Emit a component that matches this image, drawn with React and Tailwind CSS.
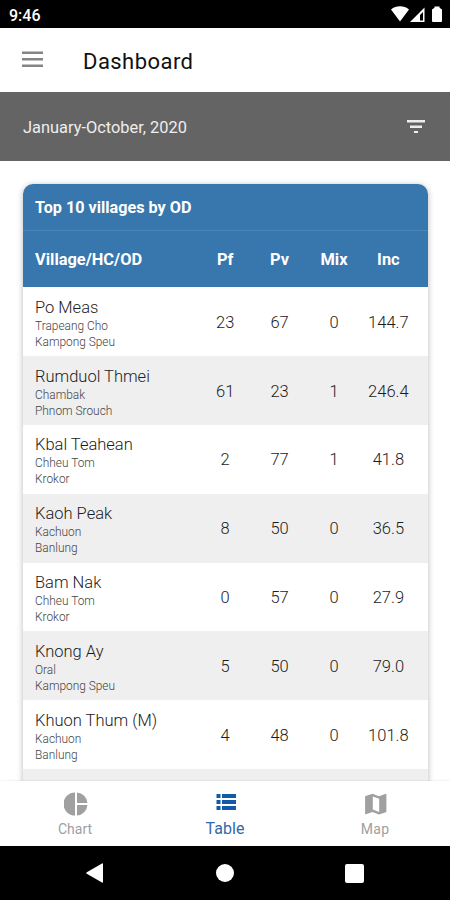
import React from 'react';

const villages = [
  { name: 'Po Meas', hc: 'Trapeang Cho', od: 'Kampong Speu', pf: '23', pv: '67', mix: '0', inc: '144.7' },
  { name: 'Rumduol Thmei', hc: 'Chambak', od: 'Phnom Srouch', pf: '61', pv: '23', mix: '1', inc: '246.4' },
  { name: 'Kbal Teahean', hc: 'Chheu Tom', od: 'Krokor', pf: '2', pv: '77', mix: '1', inc: '41.8' },
  { name: 'Kaoh Peak', hc: 'Kachuon', od: 'Banlung', pf: '8', pv: '50', mix: '0', inc: '36.5' },
  { name: 'Bam Nak', hc: 'Chheu Tom', od: 'Krokor', pf: '0', pv: '57', mix: '0', inc: '27.9' },
  { name: 'Knong Ay', hc: 'Oral', od: 'Kampong Speu', pf: '5', pv: '50', mix: '0', inc: '79.0' },
  { name: 'Khuon Thum (M)', hc: 'Kachuon', od: 'Banlung', pf: '4', pv: '48', mix: '0', inc: '101.8' },
];

function StatusBar() {
  return (
    <div className="flex h-7 shrink-0 items-center justify-between bg-black pl-[9px] pr-2 text-white">
      <span className="pt-[3px] text-[16px] font-medium leading-none">9:46</span>
      <svg className="h-7 w-[52px]" viewBox="0 0 52 28" fill="currentColor">
        <path d="M1 9.500C6 5.300 14 5.300 19 9.500L10 21.500Z" />
        <path d="M34.500 7.500V22H20ZM33 12L30 15V20.500H33Z" fillRule="evenodd" />
        <path d="M44.500 6.500h5v1.200l2.500 1.800V21q0 1-1 1h-8q-1 0-1-1V9.500l2.500-1.800z" />
      </svg>
    </div>
  );
}

function AppBar() {
  return (
    <header className="flex h-16 shrink-0 items-center bg-white pl-[22px]">
      <svg className="mb-0.5 h-4 w-[21px] text-[#858585]" viewBox="0 0 21 16" fill="currentColor">
        <path d="M0 .5h21v2.500H0zM0 7h21v2.500H0zM0 13.500h21V16H0z" />
      </svg>
      <h1 className="ml-10 mt-[3px] text-[22px] font-normal leading-none tracking-[0.45px] text-[#111]">Dashboard</h1>
    </header>
  );
}

function FilterBar() {
  return (
    <div className="flex h-[68.500px] shrink-0 items-center justify-between bg-[#646464] pl-[23px] pr-[25px] text-[#eee]">
      <span className="mt-1 text-[16.400px] leading-none">January-October, 2020</span>
      <svg className="h-[13px] w-[18px]" viewBox="0 0 18 13" fill="currentColor">
        <path d="M0 0h18v2.500H0zM3 5.500h12V8H3zM7 11h4v2H7z" />
      </svg>
    </div>
  );
}

function VillageRow({ village }) {
  return (
    <div className="grid h-[68.850px] grid-cols-[163px_repeat(4,54.400px)] items-center pl-3 font-light text-[#1c1c1c] even:bg-[#efefef]">
      <div className="pt-[3px]">
        <div className="text-[16.500px] leading-[21px]">{village.name}</div>
        <div className="text-[11.900px] leading-4 text-[#444]">{village.hc}</div>
        <div className="text-[11.900px] leading-4 text-[#444]">{village.od}</div>
      </div>
      <span className="pt-[3px] text-center text-[16.500px]">{village.pf}</span>
      <span className="pt-[3px] text-center text-[16.500px]">{village.pv}</span>
      <span className="pt-[3px] text-center text-[16.500px]">{village.mix}</span>
      <span className="pt-[3px] text-center text-[16.500px]">{village.inc}</span>
    </div>
  );
}

function VillageTable() {
  return (
    <section className="h-[720px] overflow-hidden rounded-[10px] bg-white shadow-[0_1px_6px_rgba(0,0,0,0.28)]">
      <div className="flex h-[47px] items-center border-b border-[#4a86ba] bg-[#3877ae] pl-3 pt-1 text-[16.200px] font-bold text-white">
        Top 10 villages by OD
      </div>
      <div className="grid h-[56.750px] grid-cols-[163px_repeat(4,54.400px)] items-center bg-[#3877ae] pl-3 pt-[3px] text-center text-[16.400px] font-bold text-white">
        <span className="text-left">Village/HC/OD</span>
        <span>Pf</span>
        <span>Pv</span>
        <span>Mix</span>
        <span>Inc</span>
      </div>
      <div>
        {villages.map((village) => (
          <VillageRow key={village.name} village={village} />
        ))}
        <div className="h-[68.850px] bg-[#efefef]" />
      </div>
    </section>
  );
}

function TabBar() {
  return (
    <nav className="z-10 grid h-[65px] shrink-0 grid-cols-3 bg-white text-[14px] leading-none text-[#a0a0a0] shadow-[0_0_2px_rgba(0,0,0,0.12)]">
      <div className="flex flex-col items-center">
        <svg className="ml-px mt-[11px] h-6 w-6" viewBox="0 0 24 24" fill="currentColor">
          <path d="M11 .5v23A11.500 11.500 0 0 1 11 .5zM13 .5A11.500 11.500 0 0 1 23.500 11H13zM13 13h10.500A11.500 11.500 0 0 1 13 23.500z" />
        </svg>
        <span className="mt-1.5">Chart</span>
      </div>
      <div className="flex flex-col items-center text-[#3568a8]">
        <svg className="ml-0.5 mt-3 h-[18px] w-[21px] text-[#125ba5]" viewBox="0 0 21 18" fill="currentColor">
          <path d="M.5 1h4v4h-4zM.5 7h4v4h-4zM.5 13h4v4h-4zM6 1h14v4H6zM6 7h14v4H6zM6 13h14v4H6z" />
        </svg>
        <span className="mt-2.5 text-[16px] tracking-[0.1px]">Table</span>
      </div>
      <div className="flex flex-col items-center">
        <svg className="ml-0.5 mt-[11px] h-6 w-6" viewBox="0 0 24 24" fill="currentColor">
          <path d="M21.900 1.700L15 4.200 8.500 1.700 1.700 4.100c-.4.100-.6.300-.6.700V21.700c0 .5.400.7.800.6L8.500 20 15 22.500l6.800-2.300c.4-.1.600-.4.600-.8V2.200c0-.4-.2-.6-.5-.5zM15.200 19.900L8.800 17.600V4.400l6.400 2.300z" />
        </svg>
        <span className="mt-1.5 tracking-[0.3px]">Map</span>
      </div>
    </nav>
  );
}

function SystemNav() {
  return (
    <div className="grid h-[54px] shrink-0 grid-cols-[1fr_110px_1fr] items-center bg-black text-white">
      <svg className="ml-[86px] h-5 w-[17px]" viewBox="0 0 17 20" fill="currentColor">
        <path d="M16 .5q1-.5 1 .5v18q0 1-1 .5L.8 10.800q-1.200-.8 0-1.600z" />
      </svg>
      <span className="h-[18px] w-[18px] justify-self-center rounded-full bg-white" />
      <span className="ml-[65px] h-[19px] w-[19px] rounded-xs bg-white" />
    </div>
  );
}

export default function App() {
  return (
    <div className="flex h-[900px] w-[450px] flex-col overflow-hidden bg-white font-['Roboto',sans-serif]">
      <StatusBar />
      <AppBar />
      <FilterBar />
      <main className="min-h-0 flex-1 overflow-hidden pl-[23px] pr-[22px] pt-[23px]">
        <VillageTable />
      </main>
      <TabBar />
      <SystemNav />
    </div>
  );
}
